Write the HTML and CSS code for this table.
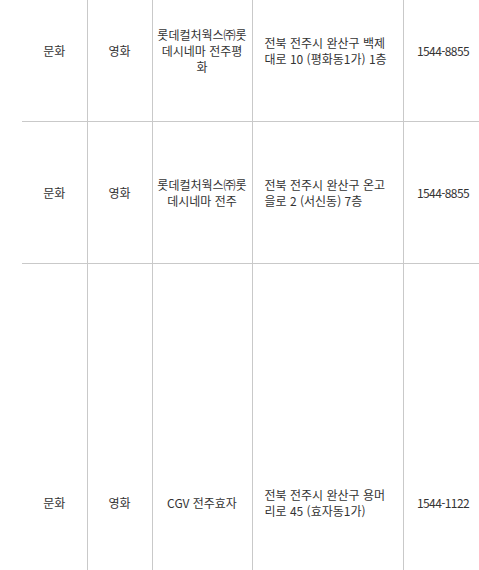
FILE: index.html
```html
<!DOCTYPE html>
<html lang="ko">
<head>
<meta charset="utf-8">
<link rel="stylesheet" href="styles.css">
</head>
<body>
<div class="wrap">
<table class="list">
<colgroup>
<col class="c-cat"><col class="c-sub"><col class="c-name"><col class="c-addr"><col class="c-tel">
</colgroup>
<tbody>
<tr class="row">
<td>문화</td><td>영화</td><td class="name">롯데컬처웍스㈜롯데시네마 전주평화</td><td class="addr">전북 전주시 완산구 백제대로 10 (평화동1가) 1층</td><td class="tel">1544-8855</td>
</tr>
<tr class="row">
<td>문화</td><td>영화</td><td class="name">롯데컬처웍스㈜롯데시네마 전주</td><td class="addr">전북 전주시 완산구 온고을로 2 (서신동) 7층</td><td class="tel">1544-8855</td>
</tr>
<tr class="row tall">
<td>문화</td><td>영화</td><td class="name">CGV 전주효자</td><td class="addr">전북 전주시 완산구 용머리로 45 (효자동1가)</td><td class="tel">1544-1122</td>
</tr>
</tbody>
</table>
</div>
</body>
</html>
```
FILE: styles.css
```css
html, body {
  margin: 0;
  padding: 0;
  background: #fff;
  overflow: hidden;
}
.wrap {
  width: 479px;
  height: 570px;
  overflow: hidden;
  padding-left: 22px;
  box-sizing: border-box;
}
.list {
  border-collapse: collapse;
  table-layout: fixed;
  width: 461px;
  margin-top: -21px;
  font-family: "Noto Sans CJK KR", "Noto Sans", sans-serif;
  font-size: 12px;
  line-height: 16px;
  color: #333;
}
.c-cat { width: 65px; }
.c-sub { width: 65px; }
.c-name { width: 100px; }
.c-addr { width: 151px; }
.c-tel { width: 80px; }
.list td {
  border: 1px solid #c9c9c9;
  text-align: center;
  vertical-align: middle;
  padding: 0 5px;
  word-break: break-all;
}
.list td:first-child {
  border-left: 0;
}
.list .name {
  padding: 0 4px;
}
.list .addr {
  text-align: left;
  padding: 0 12px;
}
.list .tel {
  letter-spacing: -0.6px;
}
.row {
  height: 142px;
}
.row.tall {
  height: 478px;
}
```
